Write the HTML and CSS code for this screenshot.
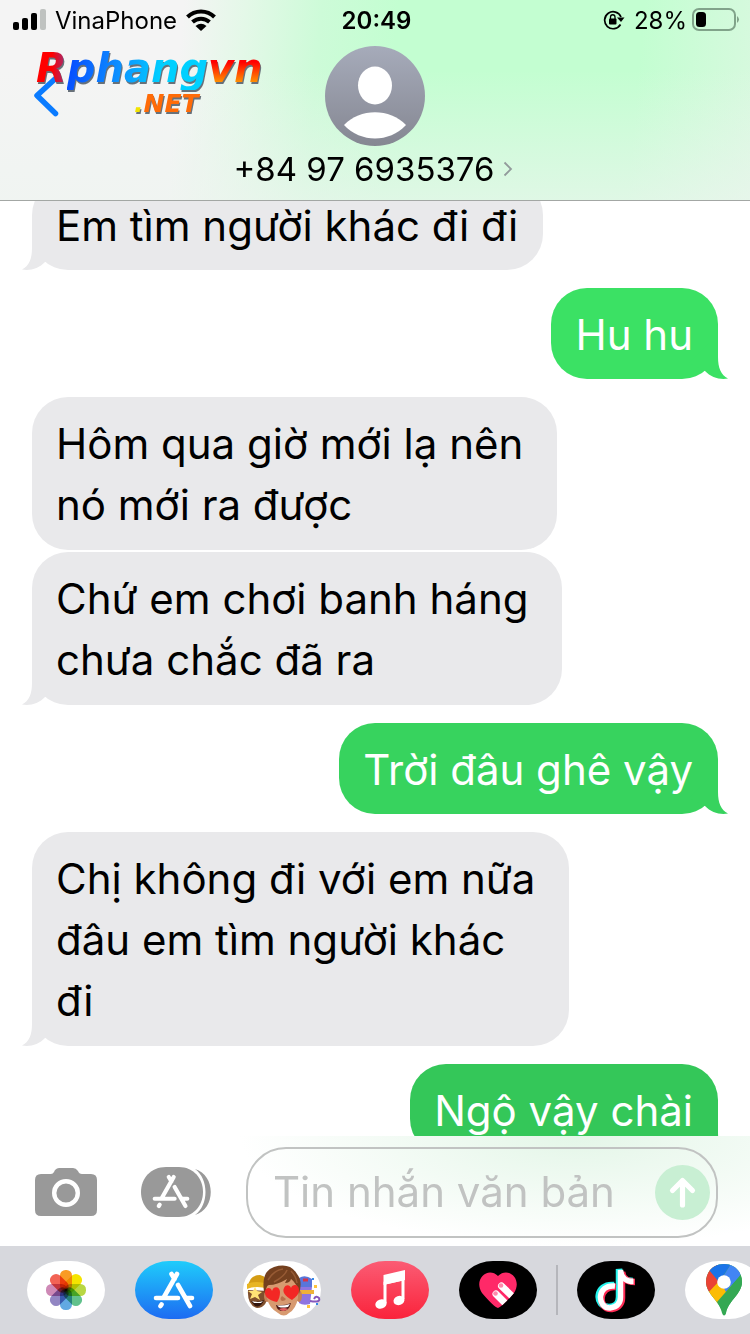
FILE: index.html
```html
<!DOCTYPE html>
<html lang="vi">
<head>
<meta charset="utf-8">
<meta name="viewport" content="width=device-width, initial-scale=1">
<title>Tin nhắn</title>
<link rel="stylesheet" href="styles.css">
</head>
<body>
<svg class="defs" aria-hidden="true">
  <symbol id="tail" viewBox="0 0 40 36"><path d="M11 0V14C11 25 8 32 1 35.5C9 37 18 34.500 24 28L40 20L20 0Z"/></symbol>
  <symbol id="appstore" viewBox="0 0 42 38">
    <g fill="none" stroke="#fff" stroke-width="4.600" stroke-linecap="round">
      <path d="M24 3L11 26M18.500 3L21.500 8M3 27H25M34 27H39M25 14L37 35M8.500 33.500L7.500 35"/>
    </g>
  </symbol>
</svg>
<div class="phone">
  <header class="header">
    <div class="status">
      <div class="status-side">
        <svg width="33" height="22" viewBox="0 0 33 22" aria-hidden="true"><rect x="0" y="13" width="6" height="8" rx="2"/><rect x="9" y="9" width="6" height="12" rx="2"/><rect x="18" y="4" width="6" height="17" rx="2"/><rect x="27" y="0" width="6" height="21" rx="2" fill="#bfc2c0"/></svg>
        <span>VinaPhone</span>
        <svg width="30" height="22" viewBox="0 0 30 22" aria-hidden="true"><g fill="none" stroke="#000" stroke-width="4"><path d="M1.500 8C9 .5 21 .5 28.500 8"/><path d="M6.500 13C11.500 8.500 18.500 8.500 23.500 13"/></g><path d="M9.500 17Q15 12.500 20.500 17L15 22Z"/></svg>
      </div>
      <time class="clock">20:49</time>
      <div class="status-side status-right">
        <svg width="22" height="20" viewBox="0 0 22 20" aria-hidden="true"><path d="M17.500 14.500A8.500 8.500 0 1 1 18 7" fill="none" stroke="#000" stroke-width="1.700"/><path d="M14 7.500H21.500L18 12Z"/><rect x="6" y="8.500" width="7.500" height="6" rx="1"/><path d="M7.500 9V7a2.200 2.200 0 0 1 4.500 0V9" fill="none" stroke="#000" stroke-width="1.300"/></svg>
        <span>28%</span>
        <svg width="48" height="24" viewBox="0 0 48 24" aria-hidden="true"><rect x="1" y="1" width="42" height="21" rx="6" fill="none" stroke="#81a38a" stroke-width="2"/><rect x="4" y="4" width="10" height="15" rx="3.500"/><path d="M45 8Q49 11.500 45 15Z" fill="#81a38a"/></svg>
      </div>
    </div>
    <div class="contact">
      <button class="back" aria-label="Quay lại"><svg width="26" height="42" viewBox="0 0 26 42"><path d="M22.500 3.500L4 20.500L22.500 38.500" fill="none" stroke="#0a7bff" stroke-width="5.500" stroke-linecap="round" stroke-linejoin="round"/></svg></button>
      <svg class="avatar" viewBox="0 0 100 100" aria-hidden="true"><defs><linearGradient id="av" x2="0" y2="1"><stop stop-color="#a6abba"/><stop offset="1" stop-color="#858792"/></linearGradient></defs><circle cx="50" cy="50" r="50" fill="url(#av)"/><ellipse cx="50" cy="39.500" rx="17" ry="19" fill="#fff"/><path d="M19 79C35 62 65 62 81 79C64 97 36 97 19 79Z" fill="#fff"/></svg>
      <button class="name">+84 97 6935376 <svg width="10" height="16" viewBox="0 0 10 16" aria-hidden="true"><path d="M1.500 1.500L8 8L1.500 14.500" fill="none" stroke="#929a9b" stroke-width="1.800"/></svg></button>
    </div>
    <div class="watermark"><span class="mark-main"><span class="mark-r">R</span><span class="mark-blue">phang</span><span class="mark-vn">vn</span></span><span class="mark-net"><span class="mark-dot">.</span>NET</span></div>
  </header>

  <main class="thread">
    <div class="messages">
      <p class="bubble in">Em tìm người khác đi đi<svg class="tail"><use href="#tail"/></svg></p>
      <p class="bubble out bright">Hu hu<svg class="tail"><use href="#tail"/></svg></p>
      <p class="bubble in wrapped">Hôm qua giờ mới lạ nên<br>nó mới ra được</p>
      <p class="bubble in wrapped follow">Chứ em chơi banh háng<br>chưa chắc đã ra<svg class="tail"><use href="#tail"/></svg></p>
      <p class="bubble out medium">Trời đâu ghê vậy<svg class="tail"><use href="#tail"/></svg></p>
      <p class="bubble in wrapped">Chị không đi với em nữa<br>đâu em tìm người khác<br>đi<svg class="tail"><use href="#tail"/></svg></p>
      <p class="bubble out deep">Ngộ vậy chài<svg class="tail"><use href="#tail"/></svg></p>
    </div>
  </main>

  <form class="composer">
    <button type="button" aria-label="Máy ảnh"><svg width="62" height="48" viewBox="0 0 62 48"><path d="M6 6H16Q18 6 19 4L20 2Q22 0 24 0H38Q41 0 43 3Q44 6 47 6H56Q62 6 62 12V42Q62 48 56 48H6Q0 48 0 42V12Q0 6 6 6Z" fill="#999"/><circle cx="31" cy="25" r="11.800" fill="none" stroke="#fff" stroke-width="4.400"/></svg></button>
    <button type="button" class="apps-toggle" aria-label="Ứng dụng"><svg width="70" height="50" viewBox="0 0 70 50"><path d="M54 2C75 8 75 42 54 48C68 38 68 12 54 2Z" fill="#999"/><path d="M25 0H38C52 0 62 11 62 25S52 50 38 50H25C10 50 0 39 0 25S10 0 25 0Z" fill="#999"/><use href="#appstore" x="11" y="7" width="38" height="35"/></svg></button>
    <div class="field">
      <input type="text" placeholder="Tin nhắn văn bản" aria-label="Tin nhắn văn bản">
      <button class="send" aria-label="Gửi"><svg width="55" height="55" viewBox="0 0 55 55"><circle cx="27.500" cy="27.500" r="27.500" fill="#c8efd3"/><path d="M27.500 40V16M17.500 25.500L27.500 15.500L37.500 25.500" fill="none" stroke="#fff" stroke-width="5.200" stroke-linecap="round" stroke-linejoin="round"/></svg></button>
    </div>
  </form>

  <nav class="apps" aria-label="Ứng dụng iMessage">
    <button class="app white" aria-label="Ảnh"><svg width="42" height="42" viewBox="-21 -21 42 42"><g class="petals"><rect x="-6" y="-20" width="12" height="21" rx="5.500" fill="#f99b24"/><rect x="-6" y="-20" width="12" height="21" rx="5.500" fill="#f5e400" transform="rotate(45)"/><rect x="-6" y="-20" width="12" height="21" rx="5.500" fill="#b8d743" transform="rotate(90)"/><rect x="-6" y="-20" width="12" height="21" rx="5.500" fill="#61c18c" transform="rotate(135)"/><rect x="-6" y="-20" width="12" height="21" rx="5.500" fill="#62a9e2" transform="rotate(180)"/><rect x="-6" y="-20" width="12" height="21" rx="5.500" fill="#9286c3" transform="rotate(225)"/><rect x="-6" y="-20" width="12" height="21" rx="5.500" fill="#ce89b6" transform="rotate(270)"/><rect x="-6" y="-20" width="12" height="21" rx="5.500" fill="#f26355" transform="rotate(315)"/></g></svg></button>
    <button class="app store" aria-label="App Store"><svg width="42" height="38"><use href="#appstore"/></svg></button>
    <button class="app white" aria-label="Memoji"><svg width="78" height="58" viewBox="0 0 78 58">
      <path d="M5 29Q4 44 14 47Q25 47 25 30Z" fill="#80502d"/>
      <path d="M5 26Q6 14 17 14Q25 15 25 26Z" fill="#d49c13"/>
      <path d="M4 23Q13 19 25 23V28Q14 24 4 28Z" fill="#e8b522"/>
      <path d="M12 26L14 30L19 31L15 34L17 39L12 36L7 38L9 33L5 30L10 30Z" fill="#ffe275"/>
      <path d="M8 40Q15 42 21 39Q18 47 12 45Z" fill="#31150e"/>
      <path d="M9 40Q15 42 20 40L18 42H11Z" fill="#fff"/>
      <path d="M56 17Q62 13 69 18V26H56Z" fill="#5876db"/>
      <path d="M56 26H69L67 43Q60 45 56 42Z" fill="#8f75e0"/>
      <path d="M57 29H71V33H57Z" fill="#efb138"/>
      <path d="M60 19H65" stroke="#d5344a" stroke-width="3"/>
      <path d="M67 40Q78 42 76 37Q73 34 71 38" fill="none" stroke="#8657bb" stroke-width="2"/>
      <path d="M69 17h2v2h-2zM73 42h2v2h-2z" fill="#3689e5"/>
      <path d="M71 24h3v3h-3zM64 44h3v3h-3z" fill="#ffc43d"/>
      <ellipse cx="24" cy="35" rx="3" ry="6" fill="#c58156"/>
      <ellipse cx="56" cy="35" rx="3" ry="6" fill="#c58156"/>
      <path d="M24 21Q40 12 55 21V37Q53 48 46 52Q41 57 35 52Q26 47 24 37Z" fill="#d79a70"/>
      <path d="M21 31Q18 10 31 6Q47 1 54 13Q60 20 56 33Q54 22 48 18Q47 22 42 22L44 18Q34 24 26 24Q22 25 24 34Z" fill="#74401f"/>
      <path d="M25 19Q31 9 40 8M31 21Q42 15 44 9M48 10Q53 15 54 22" fill="none" stroke="#975b35" stroke-width="1.500"/>
      <path d="M39 35Q36 38 39 40Q42 40 43 38" fill="#b96f49"/>
      <path d="M33 44Q41 45 48 42Q46 50 40 50Q34 50 33 44Z" fill="#4b1915"/>
      <path d="M34 44.500Q41 45 47 43L45 46Q39 47 36 46Z" fill="#fff"/>
      <path d="M36 48Q41 46 45 48Q40 52 36 48Z" fill="#e26060"/>
      <path d="M34 41C25 39 21 35 22 30C23 26 28 26 29 30C31 24 37 26 37 31C37 35 36 38 34 41Z" fill="#f32724"/>
      <path d="M49 39C42 35 39 31 41 27C43 23 47 24 48 27C50 22 56 24 56 29C56 33 53 36 49 39Z" fill="#f32724"/></svg></button>
    <button class="app music" aria-label="Nhạc"><svg width="34" height="42" viewBox="0 0 34 42"><path d="M12 34V14L30 10V30" fill="none" stroke="#fff" stroke-width="3"/><path d="M10.500 6L32 1V11L10.500 16Z" fill="#fff"/><ellipse cx="8" cy="35" rx="5.800" ry="4.600" transform="rotate(-20 8 35)" fill="#fff"/><ellipse cx="26" cy="31.500" rx="5.600" ry="4.500" transform="rotate(-20 26 31.500)" fill="#fff"/></svg></button>
    <button class="app black" aria-label="Digital Touch"><svg width="42" height="38" viewBox="0 0 42 38"><clipPath id="heart"><path d="M21 37Q17 36 5 22C-4 8 11-5 21 5C31-5 46 8 37 22Q26 35 21 37Z"/></clipPath><g clip-path="url(#heart)"><path fill="#ff2968" d="M0 0H42V38H0Z"/><path d="M19 23L32 36M24.500 15L40 30" stroke="#fff" stroke-width="7" stroke-linecap="round"/></g><circle cx="18.500" cy="22.500" r="2.300" fill="#ff8aac"/><circle cx="24" cy="14.500" r="2.300" fill="#ff8aac"/></svg></button>
    <span class="divider"></span>
    <button class="app black" aria-label="TikTok"><svg width="42" height="46" viewBox="0 0 42 46"><g fill="none" stroke-width="6.500"><path d="M19 18C0 16-1 40 14 40C21 40 24 35 24 30V2C25 10 31 14 38 14" stroke="#25f4ee"/><path d="M21 20C3 18 2 43 17 42C24 41 27 36 27 31V5C28 12 33 15 40 15" stroke="#fe2c55"/><path d="M20 19C1 17 2 41 15 41C22 40 25.500 36 25.500 30V3C26 11 32 14.500 38.500 14.500" stroke="#fff" stroke-width="5.500"/></g></svg></button>
    <button class="app white" aria-label="Google Maps"><svg width="38" height="52" viewBox="0 0 38 52"><clipPath id="pin"><path d="M19 0C8 0 1 8 1 18C1 30 15 37 17 49Q19 54 21 49C23 37 37 30 37 18C37 8 30 0 19 0Z"/></clipPath><g clip-path="url(#pin)"><path fill="#34a853" d="M0 0H38V52H0Z"/><path fill="#fbbc04" d="M0 32L19 10L27 22L10 42Z"/><path fill="#ea4335" d="M0 0H12L17 14L0 32Z"/><path fill="#1a73e8" d="M4 6L12 0H26L14 18Z"/><path fill="#4285f4" d="M26 0L38 7L34 13L21 28L15 17Z"/><path fill="#34a853" d="M40 6L12 38L20 52L40 40Z"/></g><circle cx="19" cy="18" r="6.800" fill="#fff"/></svg></button>
  </nav>
</div>
</body>
</html>
```
FILE: styles.css
```css
* { box-sizing: border-box; }
body { margin: 0; background: #fff; color: #000; font-family: Inter, "Liberation Sans", sans-serif; }
button { border: 0; padding: 0; background: none; color: inherit; font: inherit; display: flex; align-items: center; justify-content: center; flex: none; }
svg { display: block; flex: none; }
.defs { position: absolute; width: 0; height: 0; }
.phone { display: flex; flex-direction: column; height: 100vh; overflow: hidden; }

.header {
  position: relative;
  flex: none;
  border-bottom: 1px solid #a3a7a4;
  background:
    linear-gradient(rgba(238, 244, 240, 0) 35%, rgba(238, 244, 240, .65)),
    linear-gradient(95deg, #f4f4f4 24%, #e4f8e8 32%, #cdfbd8 42%, #c3fed1 52%, #c3fed1 84%, #d8f9df);
}
.status { display: grid; grid-template-columns: 1fr auto 1fr; align-items: center; height: 40px; padding: 0 10px 0 13px; font-size: 24px; }
.status-side { display: flex; align-items: center; gap: 9px; }
.status-right { justify-content: flex-end; }
.status-right span { margin-right: -4px; }
.clock { font-weight: 600; }
.contact { display: grid; grid-template-columns: 1fr auto 1fr; align-items: center; padding: 6px 33px 0; }
.back { justify-self: start; }
.avatar { width: 100px; height: 100px; }
.name { grid-column: 1 / -1; justify-self: center; gap: 8px; height: 54px; padding: 0 4px 8px 0; font-size: 33px; }
.watermark { position: absolute; left: 36px; top: 47px; display: flex; flex-direction: column; font-family: "DejaVu Sans", sans-serif; font-style: italic; font-weight: 700; }
.mark-main { font-size: 40px; line-height: 43px; display: flex; filter: drop-shadow(1px 2px 0 #68717a); }
.mark-main span { padding-right: 4px; margin-right: -4px; background-clip: text; -webkit-background-clip: text; color: transparent; }
.mark-r { background-image: linear-gradient(90deg, #f00 45%, #7b3fa0); }
.mark-blue { background-image: linear-gradient(100deg, #0646ff, #0d8dff 35%, #00d0ff 65%); }
.mark-vn { background-image: linear-gradient(#f00 35%, #ff9b00 85%); }
.mark-net { align-self: center; padding-left: 34px; font-size: 25px; line-height: 28px; color: #ff6b08; filter: drop-shadow(1px 2px 0 #68717a); }
.mark-dot { color: #f2e300; }

.thread { flex: 1; min-height: 0; overflow: hidden; }
.messages { display: flex; flex-direction: column; align-items: flex-start; gap: 18px; margin-top: -22px; padding: 0 32px; }
.bubble { position: relative; margin: 0; padding: 16px 25px 14px 24px; border-radius: 36px; font-size: 42px; line-height: 61px; white-space: nowrap; }
.wrapped { padding-right: 34px; padding-bottom: 15px; }
.in { background: #e9e9eb; fill: #e9e9eb; }
.out { align-self: flex-end; color: #fff; }
.follow { margin-top: -16px; }
.bright { background: #3be164; fill: #3be164; }
.medium { background: #37d35e; fill: #37d35e; }
.deep { background: #34c759; fill: #34c759; }
.tail { position: absolute; bottom: 0; left: -11px; width: 40px; height: 36px; }
.out .tail { left: auto; right: -11px; transform: scaleX(-1); }

.composer { display: flex; align-items: center; flex: none; height: 110px; padding: 2px 32px 0 35px; gap: 44px; background: radial-gradient(ellipse 45% 100% at 77% 0%, #e4f6e8, #fff); }
.apps-toggle { margin-right: -9px; }
.field { flex: 1; min-width: 0; display: flex; align-items: center; height: 91px; border: 2px solid #c1c3c2; border-radius: 40px; padding: 0 6px 0 25px; }
.field input { flex: 1; min-width: 0; border: 0; padding: 0; outline: 0; background: none; font: inherit; font-size: 42px; line-height: 60px; }
.field input::placeholder { color: #c1c3c2; opacity: 1; }

.apps { display: flex; align-items: center; gap: 30px; flex: none; height: 88px; padding-left: 27px; background: #d7d8dd; overflow: hidden; }
.app { width: 78px; height: 58px; border-radius: 34px / 29px; }
.white { background: #fff; }
.black { background: #000; }
.store { background: linear-gradient(#1fccfb, #1d6bf2); }
.music { background: linear-gradient(#fb5c74, #fa233b); }
.petals rect { mix-blend-mode: multiply; }
.divider { flex: none; width: 2px; height: 50px; margin: 0 -11px; background: #b5b6bb; }
```
